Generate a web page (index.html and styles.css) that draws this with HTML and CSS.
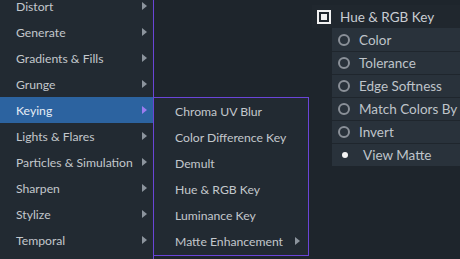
FILE: index.html
```html
<!DOCTYPE html>
<html lang="en">
<head>
  <meta charset="UTF-8">
  <title>Effects Menu</title>
  <link rel="stylesheet" href="styles.css">
</head>
<body>
  <div class="panel">
    <div class="panel-head">
      <span class="check"></span>
      <span>Hue &amp; RGB Key</span>
    </div>
    <ul class="params">
      <li><span class="radio"></span>Color</li>
      <li><span class="radio"></span>Tolerance</li>
      <li><span class="radio"></span>Edge Softness</li>
      <li><span class="radio"></span>Match Colors By</li>
      <li><span class="radio"></span>Invert</li>
      <li class="active"><span class="dot"></span>View Matte</li>
    </ul>
  </div>

  <ul class="menu">
    <li>Distort<span class="arrow"></span></li>
    <li>Generate<span class="arrow"></span></li>
    <li>Gradients &amp; Fills<span class="arrow"></span></li>
    <li>Grunge<span class="arrow"></span></li>
    <li class="selected">Keying<span class="arrow"></span></li>
    <li>Lights &amp; Flares<span class="arrow"></span></li>
    <li>Particles &amp; Simulation<span class="arrow"></span></li>
    <li>Sharpen<span class="arrow"></span></li>
    <li>Stylize<span class="arrow"></span></li>
    <li>Temporal<span class="arrow"></span></li>
  </ul>

  <ul class="menu submenu">
    <li>Chroma UV Blur</li>
    <li>Color Difference Key</li>
    <li>Demult</li>
    <li>Hue &amp; RGB Key</li>
    <li>Luminance Key</li>
    <li>Matte Enhancement<span class="arrow"></span></li>
  </ul>
</body>
</html>
```

FILE: styles.css
```css
* {
  margin: 0;
  padding: 0;
  box-sizing: border-box;
}
body {
  width: 460px;
  height: 259px;
  overflow: hidden;
  background-color: #1e252c;
  font-family: Lato, "Liberation Sans", sans-serif;
  position: relative;
}
ul {
  list-style: none;
}

/* inspector panel behind the menus */
.panel {
  margin-left: 312px;
  padding-top: 5px;
}
.panel-head {
  height: 23px;
  display: flex;
  align-items: center;
  gap: 9px;
  padding-left: 5px;
  background-color: #20272e;
  color: #c9cdd2;
  font-size: 13.5px;
}
.check {
  width: 14px;
  height: 14px;
  border: 2px solid #f2f2f2;
  padding: 2px;
  background-color: #f2f2f2;
  box-shadow: inset 0 0 0 2px #20272e;
}
.params {
  margin-left: 20px;
}
.params li {
  height: 23px;
  display: flex;
  align-items: center;
  gap: 9px;
  padding-left: 6px;
  background-color: #29323b;
  border-top: 1px solid #1f262d;
  color: #bfc4ca;
  font-size: 13.5px;
}
.params li:first-child {
  border-top: none;
}
.radio {
  width: 12px;
  height: 12px;
  border: 2px solid #8a9098;
  border-radius: 50%;
}
.params .active {
  gap: 15px;
  padding-left: 10px;
}
.dot {
  width: 6px;
  height: 6px;
  border-radius: 50%;
  background-color: #f4f4f4;
}

/* popup menus */
.menu {
  position: absolute;
  left: 0;
  top: -7px;
  width: 154px;
  height: 270px;
  background-color: #222a32;
  border-right: 1px solid #6a45d8;
}
.menu li {
  height: 26px;
  display: flex;
  align-items: center;
  justify-content: space-between;
  padding: 0 6px 0 16px;
  color: #c3c7cc;
  font-size: 12.2px;
}
.menu .selected {
  background-color: #2c63a0;
  color: #e6edf5;
}
.arrow {
  width: 0;
  height: 0;
  border-left: 5px solid #8c949d;
  border-top: 4px solid transparent;
  border-bottom: 4px solid transparent;
}
.selected .arrow {
  border-left-color: #9b7cf0;
}
.submenu {
  left: 153px;
  top: 97px;
  width: 156px;
  height: 159px;
  border: 1px solid #6a45d8;
  background-color: #222a32;
}
.submenu li {
  padding: 0 8px 0 21px;
}
```
